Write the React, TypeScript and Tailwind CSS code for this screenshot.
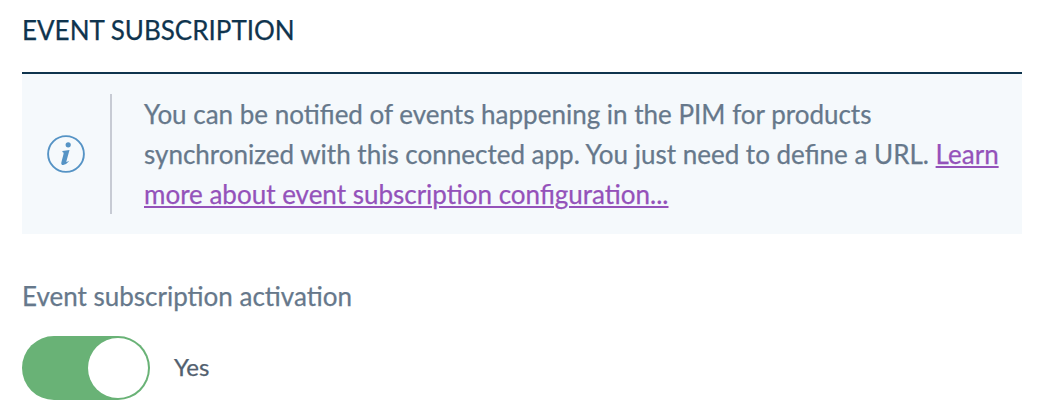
export default function App() {
  return (
    <main className="h-[410px] overflow-hidden bg-white px-[22px] font-['Lato',sans-serif] text-[26px] leading-10 text-[#66788b] [-webkit-text-stroke:0.25px_currentColor]">
      <h2 className="h-[74px] w-[1000px] border-b-2 border-[#0f344e] pt-[10px] text-[#0f344e]">EVENT SUBSCRIPTION</h2>
      <section className="flex h-[160px] w-[1000px] items-center bg-[#f5f9fc]">
        <div className="flex h-[120px] w-[90px] shrink-0 items-center border-r-2 border-[#c7cbd4] pl-6">
          <svg width="40" height="40" viewBox="0 0 40 40" fill="#5593c5">
            <circle cx="20" cy="20" r="17.9" fill="none" stroke="#5593c5" strokeWidth="1.9" />
            <path d="M16.5 17L23.5 16L20.4 27.3Q20.1 28.9 22.3 27L22.8 27.6Q20 31 17.2 31Q14.7 31 15.4 28.2L17.6 19.7Q18 18 16.3 18Z" />
            <circle cx="22.2" cy="10.8" r="2.6" />
          </svg>
        </div>
        <p className="pl-8">
          You can be notified of events happening in the PIM for products<br />
          synchronized with this connected app. You just need to define a URL.{' '}
          <a href="#" className="text-[#9452ba] underline decoration-2 underline-offset-2">Learn<br />more about event subscription configuration...</a>
        </p>
      </section>
      <div className="pt-[42px]">Event subscription activation</div>
      <div className="mt-5 flex items-center gap-6">
        <div role="switch" aria-checked="true" className="flex h-16 w-32 justify-end rounded-full bg-[#69b276] p-0.5">
          <span className="size-[60px] rounded-full bg-white" />
        </div>
        <span className="-mt-0.5 text-[24px] text-[#52606f]">Yes</span>
      </div>
    </main>
  );
}
